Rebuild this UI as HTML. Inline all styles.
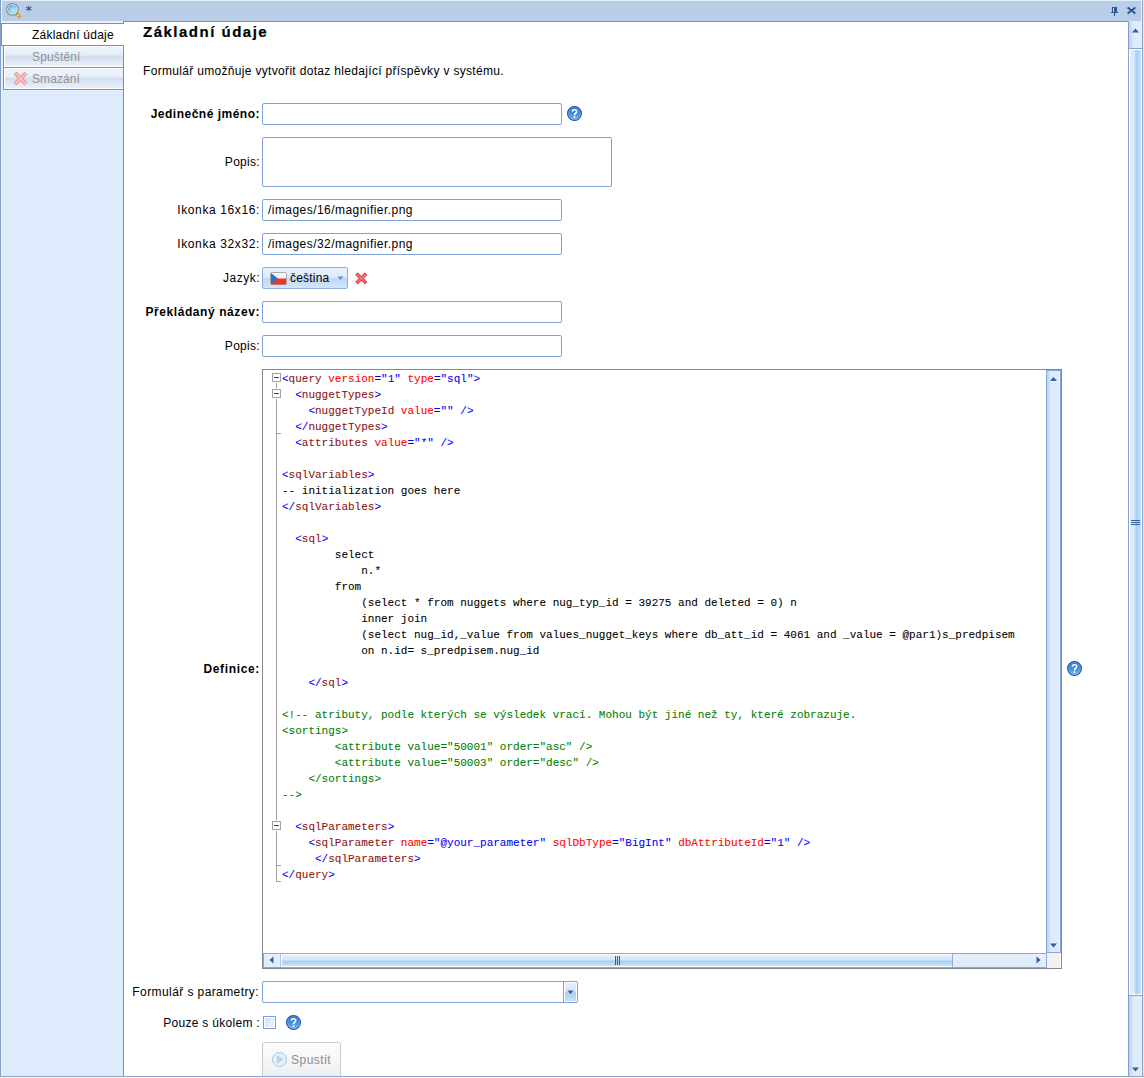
<!DOCTYPE html>
<html><head><meta charset="utf-8">
<style>
html,body{margin:0;padding:0;width:1144px;height:1078px;overflow:hidden;background:#deebfc;}
body{position:relative;font-family:"Liberation Sans",sans-serif;font-size:12px;color:#000;}
.a{position:absolute;}
.t{position:absolute;white-space:pre;line-height:14px;}
.lbl{position:absolute;right:884px;white-space:pre;font-size:12px;letter-spacing:0.3px;line-height:14px;}
.b{font-weight:bold;letter-spacing:0.5px;}
.inp{position:absolute;box-sizing:border-box;border:1px solid #7fa3d9;border-radius:2px;background:#fff;}
.help{position:absolute;width:16px;height:16px;}
.code{position:absolute;left:282px;top:371px;font-family:"Liberation Mono",monospace;font-size:11px;line-height:16px;white-space:pre;color:#000;margin:0;-webkit-text-stroke:0.08px;}
.code i{font-style:normal;}
.code .u{color:#0000ff;}
.code .m{color:#8f1010;}
.code .r{color:#ff0000;}
.code .g{color:#008000;}
.fb{position:absolute;left:272px;width:7px;height:7px;border:1px solid #a0a0a0;background:#fff;}
.fb:after{content:"";position:absolute;left:1px;top:3px;width:5px;height:1px;background:#444;}
.fl{position:absolute;left:276px;width:1px;background:#a0a0a0;}
.ft{position:absolute;left:276px;width:5px;height:1px;background:#a0a0a0;}
</style></head><body>
<!-- ===== window frame ===== -->
<div class="a" style="left:0;top:0;width:1144px;height:1px;background:#e4effc"></div>
<div class="a" style="left:2px;top:1px;width:1139px;height:20px;background:#bacde7"></div>
<div class="a" style="left:0;top:21px;width:123px;height:2px;background:#e6effa"></div>
<div class="a" style="left:0;top:23px;width:123px;height:1px;background:#8aa6cb"></div>
<div class="a" style="left:0;top:0;width:1px;height:1078px;background:#829fc4"></div>
<div class="a" style="left:1px;top:1px;width:1px;height:22px;background:#eaf3fd"></div>
<div class="a" style="left:1142px;top:0;width:1px;height:1078px;background:#8aa6cb"></div>
<div class="a" style="left:1141px;top:1px;width:1px;height:20px;background:#e6effa"></div>
<div class="a" style="left:0;top:1076px;width:1144px;height:1px;background:#8aa6cb;z-index:5"></div>
<div class="a" style="left:0;top:1077px;width:1144px;height:1px;background:#f4f8fc;z-index:5"></div>
<!-- title icons -->
<svg class="a" style="left:5px;top:2px" width="17" height="17" viewBox="0 0 17 17">
 <defs><radialGradient id="lens" cx="0.6" cy="0.65" r="0.65"><stop offset="0" stop-color="#b4ecfa"/><stop offset="0.6" stop-color="#8ed2f4"/><stop offset="1" stop-color="#4fa6e6"/></radialGradient></defs>
 <path d="M11.3 11.3 L14.2 14.4" stroke="#e39a1e" stroke-width="3.4" stroke-linecap="round"/>
 <circle cx="13" cy="13.2" r="1" fill="#ffd36a"/>
 <circle cx="7.5" cy="7.4" r="5.8" fill="#fff" stroke="#8a8a8a" stroke-width="1.2"/>
 <circle cx="7.5" cy="7.4" r="4.5" fill="url(#lens)"/>
</svg>
<svg class="a" style="left:25px;top:5px" width="8" height="7" viewBox="0 0 8 7">
 <path d="M3.8 0.8 V6.2 M1 2 L6.6 5 M6.6 2 L1 5" stroke="#1d3f86" stroke-width="0.9"/>
</svg>
<!-- pin -->
<svg class="a" style="left:1110px;top:6px" width="10" height="11" viewBox="0 0 10 11">
 <rect x="2" y="1" width="5" height="5" fill="#2a5597"/>
 <rect x="3" y="2" width="1" height="4" fill="#c9daf0"/>
 <rect x="1" y="6" width="7" height="1" fill="#2a5597"/>
 <rect x="4" y="7" width="1" height="3" fill="#2a5597"/>
</svg>
<!-- close -->
<svg class="a" style="left:1126px;top:6px" width="11" height="10" viewBox="0 0 11 10">
 <path d="M1.6 1.5 L9.4 7.5 M9.4 1.5 L1.6 7.5" stroke="#2a5597" stroke-width="1.9"/>
</svg>

<!-- ===== left tab strip ===== -->
<div class="a" style="left:1px;top:24px;width:1px;height:1052px;background:#eaf3fd"></div>
<div class="a" style="left:1px;top:23px;width:122px;height:23px;background:#7393bf"></div>
<div class="a" style="left:2px;top:24px;width:121px;height:21px;background:#fff"></div>
<div class="a" style="left:4px;top:90px;width:119px;height:1px;background:#e8f1fc"></div>
<div class="t" style="left:32px;top:28px;font-size:12px;letter-spacing:0.22px">Základní údaje</div>
<div class="a" style="left:3px;top:45px;width:120px;height:45px;background:#7393bf"></div>
<div class="a" style="left:4px;top:46px;width:119px;height:21px;background:#fff"></div>
<div class="a" style="left:4px;top:68px;width:119px;height:21px;background:#fff"></div>
<div class="a" style="left:5px;top:47px;width:118px;height:19px;background:linear-gradient(#eef4fc 0%,#e6eef9 40%,#cfdcee 52%,#dae5f4 65%,#e8f0fb 100%)"></div>
<div class="a" style="left:5px;top:69px;width:118px;height:19px;background:linear-gradient(#eef4fc 0%,#e6eef9 40%,#cfdcee 52%,#dae5f4 65%,#e8f0fb 100%)"></div>
<div class="t" style="left:32px;top:50px;font-size:12px;letter-spacing:0.15px;color:#939393">Spuštění</div>
<div class="t" style="left:32px;top:72px;font-size:12px;letter-spacing:0.1px;color:#939393">Smazání</div>
<svg class="a" style="left:13px;top:71px" width="15" height="15" viewBox="0 0 15 15">
 <path d="M2 2 L13 13 M13 2 L2 13" stroke="#eb9c9c" stroke-width="4"/>
 <path d="M2.6 2.6 L12.4 12.4 M12.4 2.6 L2.6 12.4" stroke="#f5c4c4" stroke-width="1.7"/>
</svg>

<!-- ===== content panel ===== -->
<div class="a" style="left:123px;top:21px;width:1006px;height:1px;background:#7393bf"></div>
<div class="a" style="left:123px;top:21px;width:1px;height:3px;background:#7393bf"></div>
<div class="a" style="left:123px;top:45px;width:1px;height:1032px;background:#7393bf"></div>
<div class="a" style="left:1128px;top:21px;width:1px;height:1056px;background:#7f9dc6"></div>
<div class="a" style="left:124px;top:22px;width:1004px;height:1054px;background:#fff"></div>
<div class="a" style="left:123px;top:24px;width:1px;height:21px;background:#fff"></div>

<!-- page scrollbar -->
<div class="a" style="left:1129px;top:22px;width:13px;height:1054px;background:linear-gradient(90deg,#bfd2ed 0,#cadcf2 2px,#dce9fa 4px,#dfebfb 5px,#e2eefc 100%)"></div>
<svg class="a" style="left:1131px;top:27px" width="9" height="7"><path d="M1 5.5 L4.5 1.5 L8 5.5Z" fill="#2f5f9f"/></svg>
<div class="a" style="left:1128px;top:48px;width:13px;height:946px;border:1px solid #86a3cb;border-left-color:#86a3cb;background:#fff"></div>
<div class="a" style="left:1130px;top:50px;width:11px;height:944px;background:linear-gradient(90deg,#e3edfb 0,#dae7fa 4px,#cfe1f9 5px,#a8cbf2 6px,#b3d8f5 8px,#bfe4f8 100%)"></div>
<div class="a" style="left:1131px;top:520px;width:9px;height:1px;background:#2f5f9f"></div>
<div class="a" style="left:1131px;top:522px;width:9px;height:1px;background:#2f5f9f"></div>
<div class="a" style="left:1131px;top:524px;width:9px;height:1px;background:#2f5f9f"></div>
<svg class="a" style="left:1131px;top:1066px" width="9" height="7"><path d="M1 1.5 L4.5 5.5 L8 1.5Z" fill="#2f5f9f"/></svg>

<!-- ===== form ===== -->
<div class="t" style="left:143px;top:23px;font-size:15px;line-height:18px;font-weight:bold;letter-spacing:1.5px;-webkit-text-stroke:0.2px">Základní údaje</div>
<div class="t" style="left:143px;top:64px;letter-spacing:0.32px">Formulář umožňuje vytvořit dotaz hledající příspěvky v systému.</div>

<div class="lbl b" style="top:107px">Jedinečné jméno:</div>
<div class="inp" style="left:262px;top:103px;width:300px;height:22px"></div>
<svg class="a" style="left:566px;top:105px" width="17" height="17" viewBox="0 0 17 17">
 <defs><linearGradient id="hg1" x1="0" y1="0" x2="0" y2="1"><stop offset="0" stop-color="#1f6cc4"/><stop offset="0.55" stop-color="#4b8fd6"/><stop offset="1" stop-color="#7db8ec"/></linearGradient></defs>
 <circle cx="8.5" cy="8.5" r="6.9" fill="url(#hg1)" stroke="#1a58b3" stroke-width="1.2"/>
 <circle cx="8.5" cy="8.5" r="5.8" fill="none" stroke="#9cc6f0" stroke-width="0.7" opacity="0.7"/>
 <path d="M6.4 6.8 C6.2 3.9 10.9 4.2 10.7 6.6 C10.6 8 8.5 8.4 8.5 10.2" fill="none" stroke="#fff" stroke-width="1.6"/>
 <rect x="7.75" y="11.2" width="1.5" height="1.8" fill="#fff"/>
</svg>

<div class="lbl" style="top:155px">Popis:</div>
<div class="inp" style="left:262px;top:137px;width:350px;height:50px"></div>

<div class="lbl" style="top:203px;letter-spacing:0.62px">Ikonka 16x16:</div>
<div class="inp" style="left:262px;top:199px;width:300px;height:22px"></div>
<div class="t" style="left:268px;top:203px;letter-spacing:0.45px">/images/16/magnifier.png</div>

<div class="lbl" style="top:237px;letter-spacing:0.62px">Ikonka 32x32:</div>
<div class="inp" style="left:262px;top:233px;width:300px;height:22px"></div>
<div class="t" style="left:268px;top:237px;letter-spacing:0.45px">/images/32/magnifier.png</div>

<div class="lbl" style="top:271px;letter-spacing:0.5px">Jazyk:</div>
<div class="a" style="left:262px;top:267px;width:84px;height:20px;border:1px solid #8fb0dc;border-radius:2px;background:linear-gradient(#eaf2fd 0%,#dce9fb 48%,#c0d7f5 52%,#d2e6fc 100%)"></div>
<svg class="a" style="left:270px;top:272px" width="17" height="13" viewBox="0 0 17 13">
 <rect x="0.5" y="0.5" width="16" height="12" rx="1" fill="#f4f4f4" stroke="#9a9a9a" stroke-width="0.8"/>
 <rect x="1" y="6.5" width="15" height="6" fill="#e8382c"/>
 <path d="M1 1 L8 6.5 L1 12Z" fill="#2f6fbf"/>
</svg>
<div class="t" style="left:290px;top:271px;letter-spacing:0.2px">čeština</div>
<svg class="a" style="left:337px;top:276px" width="7" height="5"><path d="M0.5 0.5 L6.5 0.5 L3.5 4Z" fill="#6d8fc0"/></svg>
<svg class="a" style="left:353px;top:270px" width="16" height="16" viewBox="0 0 16 16">
 <path d="M3.4 3.4 L13.2 13.2 M13.2 3.4 L3.4 13.2" stroke="#e43a40" stroke-width="3.6"/>
 <path d="M3.8 3.8 L12.8 12.8 M12.8 3.8 L3.8 12.8" stroke="#f6737b" stroke-width="1.8"/>
</svg>

<div class="lbl b" style="top:305px;letter-spacing:0.58px">Překládaný název:</div>
<div class="inp" style="left:262px;top:301px;width:300px;height:22px"></div>

<div class="lbl" style="top:339px">Popis:</div>
<div class="inp" style="left:262px;top:335px;width:300px;height:22px"></div>

<!-- ===== code editor ===== -->
<div class="lbl b" style="top:662px;letter-spacing:0.65px">Definice:</div>
<div class="a" style="left:262px;top:369px;width:798px;height:598px;border:1px solid #828790;background:#fff"></div>
<div class="fb" style="top:373px"></div>
<div class="fb" style="top:389px"></div>
<div class="fb" style="top:821px"></div>
<div class="fl" style="top:383px;height:5px"></div>
<div class="fl" style="top:399px;height:421px"></div>
<div class="fl" style="top:831px;height:51px"></div>
<div class="ft" style="top:433px"></div>
<div class="ft" style="top:865px"></div>
<div class="ft" style="top:881px"></div>
<pre class="code"><i class="u">&lt;</i><i class="m">query</i> <i class="r">version</i><i class="u">=&quot;1&quot;</i> <i class="r">type</i><i class="u">=&quot;sql&quot;&gt;</i>
  <i class="u">&lt;</i><i class="m">nuggetTypes</i><i class="u">&gt;</i>
    <i class="u">&lt;</i><i class="m">nuggetTypeId</i> <i class="r">value</i><i class="u">=&quot;&quot;</i> <i class="u">/&gt;</i>
  <i class="u">&lt;/</i><i class="m">nuggetTypes</i><i class="u">&gt;</i>
  <i class="u">&lt;</i><i class="m">attributes</i> <i class="r">value</i><i class="u">=&quot;*&quot;</i> <i class="u">/&gt;</i>

<i class="u">&lt;</i><i class="m">sqlVariables</i><i class="u">&gt;</i>
-- initialization goes here
<i class="u">&lt;/</i><i class="m">sqlVariables</i><i class="u">&gt;</i>

  <i class="u">&lt;</i><i class="m">sql</i><i class="u">&gt;</i>
        select
            n.*
        from
            (select * from nuggets where nug_typ_id = 39275 and deleted = 0) n
            inner join
            (select nug_id,_value from values_nugget_keys where db_att_id = 4061 and _value = @par1)s_predpisem
            on n.id= s_predpisem.nug_id

    <i class="u">&lt;/</i><i class="m">sql</i><i class="u">&gt;</i>

<i class="g">&lt;!-- atributy, podle kterých se výsledek vrací. Mohou být jiné než ty, které zobrazuje.</i>
<i class="g">&lt;sortings&gt;</i>
<i class="g">        &lt;attribute value=&quot;50001&quot; order=&quot;asc&quot; /&gt;</i>
<i class="g">        &lt;attribute value=&quot;50003&quot; order=&quot;desc&quot; /&gt;</i>
<i class="g">    &lt;/sortings&gt;</i>
<i class="g">--&gt;</i>

  <i class="u">&lt;</i><i class="m">sqlParameters</i><i class="u">&gt;</i>
    <i class="u">&lt;</i><i class="m">sqlParameter</i> <i class="r">name</i><i class="u">=&quot;@your_parameter&quot;</i> <i class="r">sqlDbType</i><i class="u">=&quot;BigInt&quot;</i> <i class="r">dbAttributeId</i><i class="u">=&quot;1&quot;</i> <i class="u">/&gt;</i>
     <i class="u">&lt;/</i><i class="m">sqlParameters</i><i class="u">&gt;</i>
<i class="u">&lt;/</i><i class="m">query</i><i class="u">&gt;</i></pre>
<!-- v scrollbar -->
<div class="a" style="left:1046px;top:370px;width:13px;height:581px;border:1px solid #86a8dc;background:linear-gradient(90deg,#bcd1ef 0,#c9dbf3 2px,#dcEAfb 3px,#dfecfc 11px,#e9f2fd 100%)"></div>
<svg class="a" style="left:1049px;top:376px" width="9" height="7"><path d="M1 5 L4.5 1 L8 5Z" fill="#2f5f9f"/><rect x="1" y="5" width="7" height="1" fill="#fff" opacity="0.8"/></svg>
<svg class="a" style="left:1049px;top:942px" width="9" height="7"><path d="M1 1.5 L4.5 5.5 L8 1.5Z" fill="#2f5f9f"/></svg>
<!-- h scrollbar -->
<div class="a" style="left:263px;top:953px;width:782px;height:13px;border:1px solid #86a8dc;background:linear-gradient(#e6f0fc 0,#dfebfb 100%)"></div>
<div class="a" style="left:280px;top:954px;width:1px;height:13px;background:#a9c4e8"></div>
<svg class="a" style="left:268px;top:955px" width="7" height="10"><path d="M5.5 1.5 L1.5 5 L5.5 8.5Z" fill="#2f5f9f"/></svg>
<svg class="a" style="left:1035px;top:955px" width="7" height="10"><path d="M1.5 1.5 L5.5 5 L1.5 8.5Z" fill="#2f5f9f"/></svg>
<div class="a" style="left:281px;top:954px;width:670px;height:11px;border:1px solid #fff;border-right-color:#fff;background:linear-gradient(#e4eefc 0%,#d5e5fb 45%,#a9cbf1 55%,#b8dbf6 80%,#c6e6fa 100%)"></div>
<div class="a" style="left:952px;top:954px;width:1px;height:13px;background:#8fb0dc"></div>
<div class="a" style="left:615px;top:956px;width:1px;height:9px;background:#2f5f9f"></div>
<div class="a" style="left:617px;top:956px;width:1px;height:9px;background:#2f5f9f"></div>
<div class="a" style="left:619px;top:956px;width:1px;height:9px;background:#2f5f9f"></div>
<div class="a" style="left:1047px;top:953px;width:13px;height:15px;background:#f0f0f0"></div>
<svg class="a" style="left:1066px;top:660px" width="17" height="17" viewBox="0 0 17 17">
 <defs><linearGradient id="hg2" x1="0" y1="0" x2="0" y2="1"><stop offset="0" stop-color="#1f6cc4"/><stop offset="0.55" stop-color="#4b8fd6"/><stop offset="1" stop-color="#7db8ec"/></linearGradient></defs>
 <circle cx="8.5" cy="8.5" r="6.9" fill="url(#hg2)" stroke="#1a58b3" stroke-width="1.2"/>
 <circle cx="8.5" cy="8.5" r="5.8" fill="none" stroke="#9cc6f0" stroke-width="0.7" opacity="0.7"/>
 <path d="M6.4 6.8 C6.2 3.9 10.9 4.2 10.7 6.6 C10.6 8 8.5 8.4 8.5 10.2" fill="none" stroke="#fff" stroke-width="1.6"/>
 <rect x="7.75" y="11.2" width="1.5" height="1.8" fill="#fff"/>
</svg>

<!-- ===== bottom ===== -->
<div class="lbl" style="top:985px;right:885px;letter-spacing:0.41px">Formulář s parametry:</div>
<div class="inp" style="left:262px;top:981px;width:316px;height:22px"></div>
<div class="a" style="left:563px;top:982px;width:1px;height:20px;background:#7fa3d9"></div>
<div class="a" style="left:565px;top:983px;width:11px;height:18px;background:linear-gradient(#e6effc 0%,#d8e7fb 45%,#a9cbf1 50%,#c2e3fa 100%)"></div>
<svg class="a" style="left:567px;top:990px" width="7" height="5"><path d="M0.5 0.5 L6.5 0.5 L3.5 4Z" fill="#2f5f9f"/></svg>

<div class="lbl" style="top:1016px">Pouze s úkolem :</div>
<div class="a" style="left:263px;top:1016px;width:11px;height:11px;border:1px solid #7b9ed6;background:linear-gradient(135deg,#cddcf5 0%,#f5f8fe 100%);box-shadow:inset 0 0 0 1px #fff"></div>
<svg class="a" style="left:285px;top:1014px" width="17" height="17" viewBox="0 0 17 17">
 <defs><linearGradient id="hg3" x1="0" y1="0" x2="0" y2="1"><stop offset="0" stop-color="#1f6cc4"/><stop offset="0.55" stop-color="#4b8fd6"/><stop offset="1" stop-color="#7db8ec"/></linearGradient></defs>
 <circle cx="8.5" cy="8.5" r="6.9" fill="url(#hg3)" stroke="#1a58b3" stroke-width="1.2"/>
 <circle cx="8.5" cy="8.5" r="5.8" fill="none" stroke="#9cc6f0" stroke-width="0.7" opacity="0.7"/>
 <path d="M6.4 6.8 C6.2 3.9 10.9 4.2 10.7 6.6 C10.6 8 8.5 8.4 8.5 10.2" fill="none" stroke="#fff" stroke-width="1.6"/>
 <rect x="7.75" y="11.2" width="1.5" height="1.8" fill="#fff"/>
</svg>

<div class="a" style="left:262px;top:1042px;width:77px;height:40px;border:1px solid #c4ccd4;border-radius:3px;background:linear-gradient(#fdfdfd 0%,#f2f3f5 60%,#e8eaed 100%)"></div>
<svg class="a" style="left:271px;top:1051px" width="17" height="17" viewBox="0 0 17 17">
 <circle cx="8.5" cy="8.5" r="7" fill="#e4f0fb" stroke="#a9c8e8" stroke-width="1"/>
 <path d="M6.5 5 L11.5 8.5 L6.5 12Z" fill="#bcd3ec" stroke="#9fbde0" stroke-width="0.6"/>
</svg>
<div class="t" style="left:291px;top:1053px;color:#8d8d8d;letter-spacing:0.5px">Spustit</div>
</body></html>
